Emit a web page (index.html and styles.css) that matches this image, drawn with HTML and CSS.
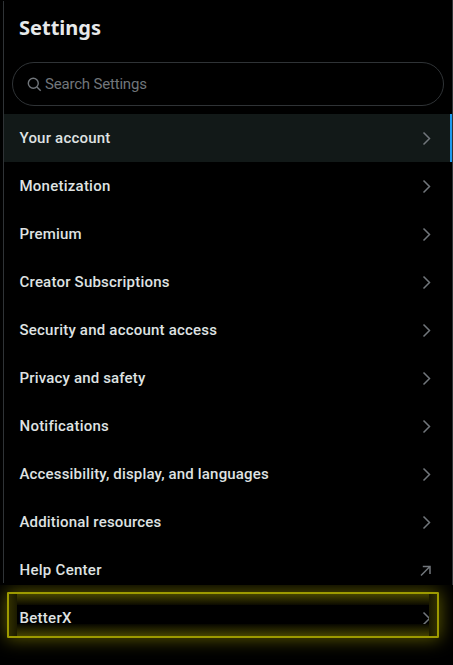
FILE: index.html
```html
<!DOCTYPE html>
<html lang="en">
<head>
<meta charset="utf-8">
<title>Settings</title>
<link rel="stylesheet" href="styles.css">
</head>
<body>
<svg class="symbols" aria-hidden="true">
  <symbol id="chevron" viewBox="0 0 20 20"><path d="M7.5 3.5l6 6-6 6"/></symbol>
  <symbol id="arrow" viewBox="0 0 20 20"><path d="M5 14.5L13.7 5.8M6.8 5.5H14V13"/></symbol>
</svg>
<main class="settings">
  <h1 class="title"><span>Settings</span></h1>
  <label class="search">
    <svg viewBox="0 0 16 16"><circle cx="6.7" cy="6.7" r="5.3"/><path d="M10.6 10.6l4 4"/></svg>
    <span>Search Settings</span>
  </label>
  <nav class="menu">
    <a class="row active"><span class="account">Your account</span><svg><use href="#chevron"/></svg></a>
    <a class="row"><span class="monetization">Monetization</span><svg><use href="#chevron"/></svg></a>
    <a class="row"><span class="premium">Premium</span><svg><use href="#chevron"/></svg></a>
    <a class="row"><span class="creator">Creator Subscriptions</span><svg><use href="#chevron"/></svg></a>
    <a class="row"><span class="security">Security and account access</span><svg><use href="#chevron"/></svg></a>
    <a class="row"><span class="privacy">Privacy and safety</span><svg><use href="#chevron"/></svg></a>
    <a class="row"><span class="notifications">Notifications</span><svg><use href="#chevron"/></svg></a>
    <a class="row"><span class="accessibility">Accessibility, display, and languages</span><svg><use href="#chevron"/></svg></a>
    <a class="row"><span class="resources">Additional resources</span><svg><use href="#chevron"/></svg></a>
    <a class="row"><span class="help">Help Center</span><svg><use href="#arrow"/></svg></a>
    <a class="row highlighted"><span class="betterx">BetterX</span><svg><use href="#chevron"/></svg><i class="glow"></i></a>
  </nav>
</main>
</body>
</html>
```
FILE: styles.css
```css
* { box-sizing: border-box; }
body {
  margin: 0;
  background: #000;
  color: #dfe2e2;
  font: 500 15px/20px Roboto, "Liberation Sans", sans-serif;
  overflow: hidden;
}
.symbols { position: absolute; width: 0; height: 0; }
.settings {
  height: 665px;
  padding-left: 4px;
  background:
    linear-gradient(#2f3336, #2f3336) 3px 1px / 1px 582px no-repeat,
    linear-gradient(#2f3336, #2f3336) 452px 0 / 1px 585px no-repeat;
}
.title {
  margin: 0;
  height: 62px;
  padding: 16px 15px 0;
  color: #e7e9ea;
  font: 700 20px/24px "Noto Sans", sans-serif;
}
.search {
  display: flex;
  align-items: center;
  gap: 3px;
  height: 44px;
  margin: 0 9px 8px 8px;
  padding-left: 14px;
  border: 1px solid #2f3336;
  border-radius: 22px;
  color: #71767b;
  font-weight: 400;
  letter-spacing: -0.19px;
}
.search svg { width: 15px; height: 15px; }
svg { fill: none; stroke: #71767b; stroke-width: 1.5; }
.row {
  position: relative;
  display: flex;
  align-items: center;
  justify-content: space-between;
  height: 48px;
  width: 448px;
  padding: 0 16px 0 15.5px;
  letter-spacing: 0.17px;
}
.row svg { width: 20px; height: 20px; margin-top: 2px; }
.account, .creator, .security { letter-spacing: 0.21px; }
.monetization, .notifications { letter-spacing: 0.24px; }
.help, .betterx { letter-spacing: 0.28px; }
.active {
  background: #121918;
  box-shadow: inset -2px 0 #1d9bf0;
}
.glow {
  position: absolute;
  left: 3px;
  top: -2px;
  width: 432px;
  height: 46px;
  border: 2px solid #9d9a00;
  border-radius: 1px;
  box-shadow: 0 0 18px 1px #5c5900;
  clip-path: inset(-7px -15px -22px -8px);
  background:
    linear-gradient(to right, #302e00, #1b1a00) left / 8px 100% no-repeat,
    linear-gradient(to left, #302e00, #1b1a00) right / 8px 100% no-repeat,
    linear-gradient(#454300, #0b0a00) top / 100% 11px no-repeat,
    linear-gradient(to top, #454300, #070700) bottom / 100% 12px no-repeat;
}
```
